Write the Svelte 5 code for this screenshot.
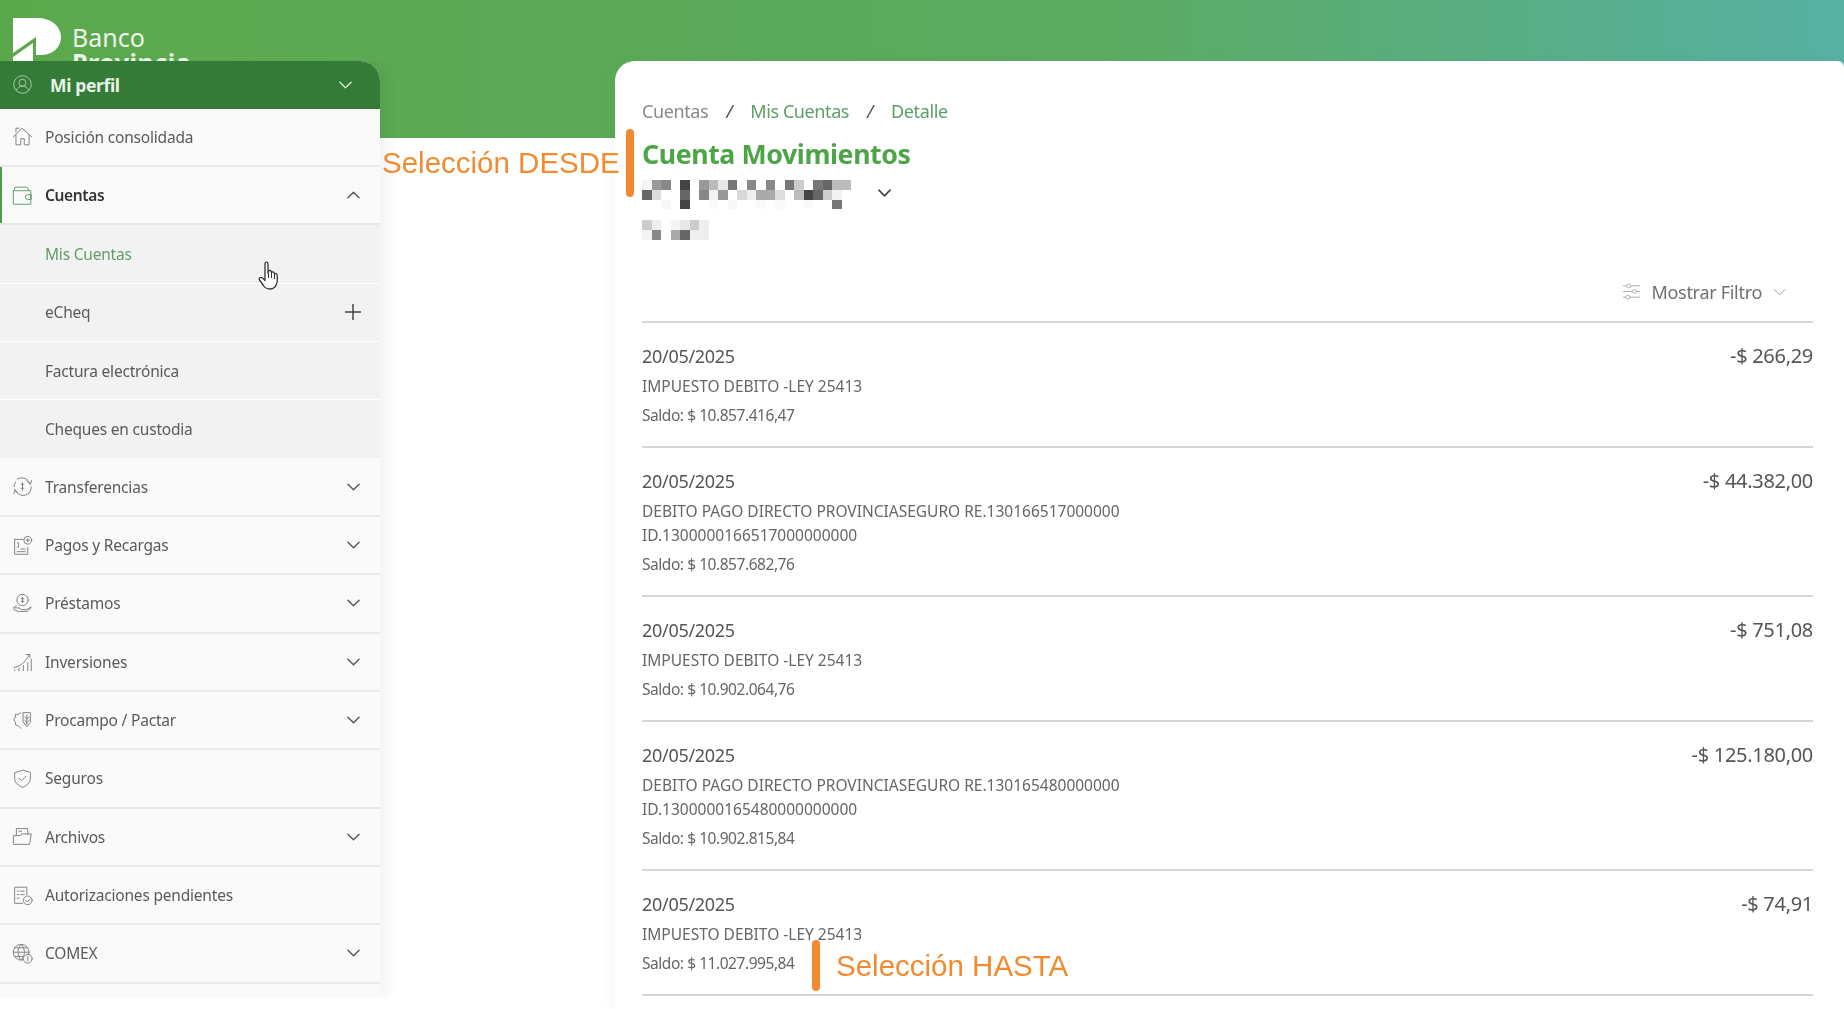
<script>
  const menuTop = [{ label: 'Posición consolidada', icon: 'home' }];
  const subItems = [
    { label: 'Mis Cuentas', active: true },
    { label: 'eCheq', plus: true },
    { label: 'Factura electrónica' },
    { label: 'Cheques en custodia' }
  ];
  const menuRest = [
    { label: 'Transferencias', icon: 'transfer', chevron: true },
    { label: 'Pagos y Recargas', icon: 'pay', chevron: true },
    { label: 'Préstamos', icon: 'loan', chevron: true },
    { label: 'Inversiones', icon: 'invest', chevron: true },
    { label: 'Procampo / Pactar', icon: 'campo', chevron: true },
    { label: 'Seguros', icon: 'shield' },
    { label: 'Archivos', icon: 'folder', chevron: true },
    { label: 'Autorizaciones pendientes', icon: 'auth' },
    { label: 'COMEX', icon: 'globe', chevron: true }
  ];

  const movements = [
    { amount: '-$ 266,29', desc: ['IMPUESTO DEBITO -LEY 25413'], saldo: 'Saldo: $ 10.857.416,47' },
    { amount: '-$ 44.382,00', desc: ['DEBITO PAGO DIRECTO PROVINCIASEGURO RE.130166517000000', 'ID.1300000166517000000000'], saldo: 'Saldo: $ 10.857.682,76' },
    { amount: '-$ 751,08', desc: ['IMPUESTO DEBITO -LEY 25413'], saldo: 'Saldo: $ 10.902.064,76' },
    { amount: '-$ 125.180,00', desc: ['DEBITO PAGO DIRECTO PROVINCIASEGURO RE.130165480000000', 'ID.1300000165480000000000'], saldo: 'Saldo: $ 10.902.815,84' },
    { amount: '-$ 74,91', desc: ['IMPUESTO DEBITO -LEY 25413'], saldo: 'Saldo: $ 11.027.995,84' }
  ];

  // pixelated account name and alias, one array per row
  const w = '#fff';
  const blurAccount = [
    ['#f4f4f4', '#999', '#888', w, '#444', w, '#999', '#bbb', '#e8e8e8', '#777', w, '#888', w, '#888', w, '#777', '#ccc', w, '#777', '#666', '#bbb', '#bbb', w],
    ['#666', '#ddd', w, w, '#666', w, '#888', '#f2f2f2', '#999', w, '#d8d8d8', '#eee', '#aaa', '#aaa', '#ddd', w, '#bbb', '#444', '#666', '#ccc', '#f2f2f2', w, w],
    [w, w, '#f8f8f8', w, '#444', w, w, '#fafafa', w, '#f8f8f8', w, w, '#fafafa', w, '#fafafa', w, w, '#fafafa', w, w, '#777', w, w]
  ];
  const blurAlias = [
    ['#ccc', '#eee', w, '#f4f4f4', '#e8e8e8', '#ccc', '#eee'],
    ['#f4f4f4', '#888', w, '#aaa', '#666', '#eee', '#eee']
  ];
</script>

{#snippet icon(name)}
  <svg class="ico" viewBox="0 0 24 24" fill="none" stroke="currentColor" stroke-width="1.1" stroke-linejoin="round" stroke-linecap="round">
    {#if name === 'home'}
      <path d="M1.5 12.5 11.5 2.5l11 10M4.500 10v11.500h5.500v-7h4v7h5.500V10M4.500 7V2.500H8" />
    {:else if name === 'wallet'}
      <path d="M2 6.500h19.500v15.500H2zM2 6.500 3.500 2.500h14l2 4M21.500 11h-3.500a2.700 2.700 0 0 0 0 5.500h3.500z" />
    {:else if name === 'transfer'}
      <path d="M21 9.500A10 10 0 0 0 6 3.500M3 15a10 10 0 0 0 16.500 4.500 10 10 0 0 0 2.500-7M2.500 12A10 10 0 0 1 4 7M17 5.500l4 4 1.500-4.500M2 20l1.500-4 3 3M12 7.500v9M10.500 9.500h3M10.500 14h3" />
    {:else if name === 'pay'}
      <path d="M3 5h10M3 5v17h15v-8M6 9h1.500v5H6M10 16h5M6 19h9" />
      <circle cx="18" cy="6" r="4.500" /><path d="M18 4v4M16 6h4" />
    {:else if name === 'loan'}
      <circle cx="12" cy="8" r="6.500" /><path d="M12 5v6M10.500 6.500h3M10.500 9.500h3M2 17h6l3 2h5l6-3-4 5H7l-5-2M5 14l-3 3" />
    {:else if name === 'invest'}
      <path d="M2 19C9 18 15 13 20 4M16 4h4.500v4M3 22.500v-1M8 22.500v-3M13 22.500v-6M18 22.500v-9M22 22.500v-13" />
    {:else if name === 'campo'}
      <path d="M10 3 7 5H4v3l-2 3 2 3v3l3 1 3 3" /><path d="M13 3h8v11l-4 5-4-5zM17 5.500v11M14.500 8l2.500 2 2.500-2M14.500 12l2.500 2 2.500-2" />
    {:else if name === 'shield'}
      <path d="M12 2.500 3 5.500v6c0 5 3.500 8.500 9 10.500 5.500-2 9-5.500 9-10.500v-6zM8 11.500l3 3 5-5" />
    {:else if name === 'folder'}
      <path d="M5 10V3h13v7M8 6h3M2 11h8l1-2h11l-2 12H2z" />
    {:else if name === 'auth'}
      <path d="M12 21H3V2.500h14V11M6 7h2M10 7h4M6 11h2M10 11h4M6 15h2" />
      <circle cx="18" cy="17.500" r="5" /><path d="m15.500 17.500 2 2 3-3.500" />
    {:else if name === 'globe'}
      <circle cx="10.500" cy="10.500" r="9" /><path d="M1.500 10.500h18M10.500 1.500c-5 5-5 13 0 18M10.500 1.500c5 5 5 13 0 18M3 5.500h15M3 15.500h9" />
      <circle cx="18" cy="18" r="5" fill="#fafafa" /><path d="M18 15.500v5" />
    {/if}
  </svg>
{/snippet}

{#snippet chevron(up = false)}
  <svg class="chev" class:up viewBox="0 0 14 8" fill="none" stroke="currentColor" stroke-width="1.5" stroke-linecap="round" stroke-linejoin="round">
    <path d="M1 1l6 6 6-6" />
  </svg>
{/snippet}

<div class="page">
  <header class="top">
    <svg class="logo-mark" viewBox="0 0 48 48">
      <path fill="#fff" d="M0 0h24c14 0 24 8 24 19 0 11-9 18-20 18h-5V19L0 35z" />
      <path fill="#fff" d="M0 39 20 25v23H0z" />
    </svg>
    <div class="logo-text">
      <span>Banco</span>
      <strong>Provincia</strong>
    </div>
  </header>

  <div class="layout">
    <aside class="sidebar">
      <div class="profile">
        <svg class="ico profile-ico" viewBox="0 0 24 24" fill="none" stroke="currentColor" stroke-width="1.1">
          <circle cx="12" cy="12" r="10" /><circle cx="12" cy="10" r="4" /><path d="M5 19c1-3.500 3.500-5 7-5s6 1.500 7 5" />
        </svg>
        <span class="profile-name">Mi perfil</span>
        {@render chevron()}
      </div>

      {#each menuTop as item}
        <div class="row">
          {@render icon(item.icon)}
          <span>{item.label}</span>
        </div>
      {/each}

      <div class="row open">
        {@render icon('wallet')}
        <span>Cuentas</span>
        {@render chevron(true)}
      </div>
      {#each subItems as sub}
        <div class="sub" class:active={sub.active}>
          <span>{sub.label}</span>
          {#if sub.plus}
            <svg class="plus" viewBox="0 0 16 16" fill="none" stroke="currentColor" stroke-width="1.5"><path d="M8 0v16M0 8h16" /></svg>
          {/if}
        </div>
      {/each}

      {#each menuRest as item}
        <div class="row">
          {@render icon(item.icon)}
          <span>{item.label}</span>
          {#if item.chevron}
            {@render chevron()}
          {/if}
        </div>
      {/each}
      <div class="row-tail"></div>
    </aside>

    <main class="card">
      <nav class="crumbs">
        <span class="crumb-root">Cuentas</span>
        <i>/</i>
        <span class="crumb-link">Mis Cuentas</span>
        <i>/</i>
        <span class="crumb-link">Detalle</span>
      </nav>
      <h1>Cuenta Movimientos</h1>

      <div class="account">
        <div class="pixels">
          {#each blurAccount as line}
            {#each line as c}
              <b style="background:{c}"></b>
            {/each}
          {/each}
        </div>
        <svg class="account-chev" viewBox="0 0 14 8" fill="none" stroke="currentColor" stroke-width="1.8" stroke-linecap="round" stroke-linejoin="round"><path d="M1 1l6 6 6-6" /></svg>
      </div>
      <div class="pixels alias">
        {#each blurAlias as line}
          {#each line as c}
            <b style="background:{c}"></b>
          {/each}
        {/each}
      </div>

      <div class="filter">
        <svg class="filter-ico" viewBox="0 0 20 18" fill="none" stroke="currentColor" stroke-width="1">
          <path d="M1 3h4M9 3h10M1 9h10M15 9h4M1 15h3M8 15h11" />
          <circle cx="7" cy="3" r="2" /><circle cx="13" cy="9" r="2" /><circle cx="6" cy="15" r="2" />
        </svg>
        <span>Mostrar Filtro</span>
        <svg class="filter-chev" viewBox="0 0 14 8" fill="none" stroke="currentColor" stroke-width="1"><path d="M1 1l6 6 6-6" /></svg>
      </div>

      <div class="list">
        {#each movements as m}
          <article class="move">
            <div class="move-head">
              <span class="date">20/05/2025</span>
              <span class="amount">{m.amount}</span>
            </div>
            <div class="desc">
              {#each m.desc as d}
                <div>{d}</div>
              {/each}
            </div>
            <div class="saldo">{m.saldo}</div>
          </article>
        {/each}
      </div>
    </main>
  </div>

  <!-- annotations drawn over the screenshot -->
  <div class="note note-desde"><span>Selección DESDE</span><em></em></div>
  <div class="note note-hasta"><em></em><span>Selección HASTA</span></div>

  <svg class="cursor" viewBox="0 0 24 32">
    <path fill="#fff" stroke="#333" stroke-width="1.3" stroke-linejoin="round" d="M7 3c0-2.500 3-2.500 3 0v9l.5-2c1-1 2.500-.5 2.800.5l.2 1c.8-1 2.500-.7 2.800.6l.2.9c1-.8 2.500-.3 2.600 1 .3 3 .2 7-.6 9-1 3-3 5-6.500 5-3 0-5-1-6.500-3.500L1.500 19c-1-2 1-3.500 3-2l2.500 2.500z" />
    <path fill="none" stroke="#333" stroke-width="1" d="M10.500 12v5M13.500 12v5M16.500 13v5" />
  </svg>
</div>

<style>
  :global(body) {
    margin: 0;
    overflow: hidden;
    background: #fff;
  }

  .page {
    position: relative;
    width: 1844px;
    height: 1009px;
    overflow: hidden;
    font-family: 'Noto Sans', 'Open Sans', sans-serif;
    color: #555;
    background: linear-gradient(90deg, #5ba84c 0%, #5cab62 60%, #57b0a3 100%) no-repeat;
    background-size: 100% 138px;
    filter: blur(0.45px);
  }

  .top {
    height: 61px;
    overflow: hidden;
    display: flex;
    align-items: flex-start;
    gap: 11px;
    padding: 18px 0 0 13px;
    box-sizing: border-box;
    color: #fff;
  }

  .logo-mark {
    width: 48px;
    height: 48px;
    flex: none;
  }

  .logo-text {
    display: flex;
    flex-direction: column;
    font-size: 25px;
    line-height: 25px;
    margin-top: 7px;
    color: #eef6ea;
  }

  .logo-text strong {
    font-weight: 700;
    letter-spacing: 0.5px;
  }

  .layout {
    display: flex;
    align-items: flex-start;
    height: 948px;
    gap: 235px;
  }

  .sidebar {
    width: 380px;
    flex: none;
    background: #fafafa;
    border-radius: 0 20px 0 0;
    box-shadow: 6px 0 16px rgba(0, 0, 0, 0.06);
    clip-path: inset(0 -30px 0 0);
    font-size: 15.5px;
    letter-spacing: -0.2px;
  }

  .profile {
    height: 47.5px;
    box-sizing: border-box;
    display: flex;
    align-items: center;
    padding: 0 28px 0 12px;
    background: #347b38;
    border-radius: 0 20px 0 0;
    color: #eaf3e8;
    letter-spacing: -0.35px;
  }

  .profile .profile-ico {
    width: 21px;
    height: 21px;
    color: #a9cfa9;
    margin-right: 17px;
  }

  .profile-name {
    flex: 1;
    font-weight: 700;
    font-size: 17.5px;
  }

  .profile .chev {
    color: #d8e8d5;
  }

  .row {
    height: 58.35px;
    box-sizing: border-box;
    display: flex;
    align-items: center;
    padding: 0 20px 0 12px;
    border-bottom: 2px solid #e9e9e9;
    color: #5a5a5a;
  }

  .row span {
    flex: 1;
  }

  .row.open {
    box-shadow: inset 2px 0 0 #4f9f49;
    color: #333;
    font-weight: 600;
    letter-spacing: -0.35px;
  }

  .row.open .ico {
    color: #5f9d66;
  }

  .row-tail {
    height: 14px;
  }

  .ico {
    width: 21px;
    height: 21px;
    flex: none;
    margin-right: 12px;
    color: #808080;
  }

  .chev {
    width: 13px;
    height: 8px;
    flex: none;
    color: #555;
  }

  .chev.up {
    transform: rotate(180deg);
  }

  .sub {
    height: 58.35px;
    box-sizing: border-box;
    display: flex;
    align-items: center;
    justify-content: space-between;
    padding: 0 19px 0 45px;
    background: #f2f2f2;
    border-bottom: 1.5px solid #fff;
    color: #5a5a5a;
  }

  .sub.active {
    color: #5f9d66;
  }

  .plus {
    width: 16px;
    height: 16px;
    color: #444;
  }

  .card {
    flex: 1;
    height: 100%;
    box-sizing: border-box;
    background: #fff;
    border-radius: 20px 6px 0 0;
    box-shadow: -6px 0 12px rgba(0, 0, 0, 0.025);
    padding: 38px 31px 0 27px;
  }

  .crumbs {
    display: flex;
    align-items: center;
    height: 24px;
    font-size: 18px;
    letter-spacing: -0.4px;
  }

  .crumbs i {
    margin: 0 18px;
    color: #555;
    font-style: italic;
  }

  .crumb-root {
    color: #8a8a8a;
  }

  .crumb-link {
    color: #5a9f6a;
  }

  h1 {
    margin: 13px 0 0;
    font-size: 26.7px;
    line-height: 36px;
    font-weight: 700;
    letter-spacing: -0.4px;
    color: #4da548;
  }

  .account {
    display: flex;
    align-items: center;
    margin-top: 8px;
  }

  .pixels {
    display: grid;
    grid-template-columns: repeat(23, 9.53px);
    grid-auto-rows: 9.8px;
    filter: blur(0.6px);
  }

  .alias {
    grid-template-columns: repeat(7, 9.53px);
    margin-top: 11px;
  }

  .account-chev {
    width: 13px;
    height: 8px;
    margin: 0 0 3px 17px;
    color: #444;
  }

  .filter {
    display: flex;
    align-items: center;
    justify-content: flex-end;
    margin-top: 40px;
    padding-right: 27px;
    height: 24px;
    font-size: 18px;
    letter-spacing: -0.3px;
    color: #707070;
  }

  .filter-ico {
    width: 19px;
    height: 17px;
    margin-right: 10px;
    color: #aaa;
  }

  .filter-chev {
    width: 13px;
    height: 8px;
    margin-left: 11px;
    color: #999;
  }

  .list {
    margin-top: 17px;
    border-top: 2px solid #d6d6d6;
  }

  .move {
    padding-top: 21px;
    padding-bottom: 19px;
    border-bottom: 2px solid #d6d6d6;
  }

  .move-head {
    display: flex;
    justify-content: space-between;
    height: 24px;
    line-height: 24px;
    font-size: 18px;
    letter-spacing: -0.3px;
    color: #555;
  }

  .amount {
    font-size: 20px;
    letter-spacing: -0.3px;
  }

  .desc {
    margin-top: 6px;
    font-size: 15.5px;
    line-height: 24px;
    color: #666;
  }

  .saldo {
    margin-top: 5px;
    font-size: 15.5px;
    line-height: 24px;
    letter-spacing: -0.45px;
    color: #666;
  }

  .note {
    position: absolute;
    display: flex;
    align-items: center;
    color: #f28a30;
    font-family: 'Liberation Sans', Arial, sans-serif;
    font-size: 29.5px;
  }

  .note em {
    display: block;
    width: 8px;
    border-radius: 4px;
    background: #f28a30;
  }

  .note-desde {
    left: 382px;
    top: 129px;
    height: 68px;
    gap: 6px;
  }

  .note-desde em {
    height: 68px;
  }

  .note-hasta {
    left: 812px;
    top: 940px;
    height: 51px;
    gap: 16px;
  }

  .note-hasta em {
    height: 51px;
  }

  .cursor {
    position: absolute;
    left: 258px;
    top: 261px;
    width: 24px;
    height: 32px;
  }
</style>
